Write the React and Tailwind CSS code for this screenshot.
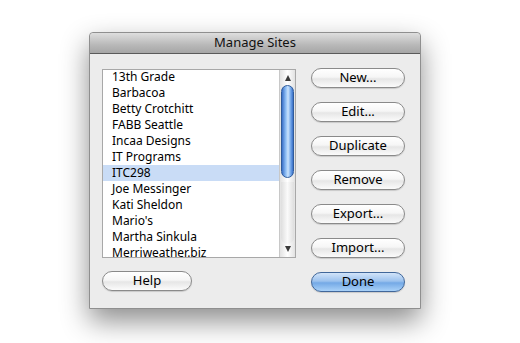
const sites = [
    '13th Grade',
    'Barbacoa',
    'Betty Crotchitt',
    'FABB Seattle',
    'Incaa Designs',
    'IT Programs',
    'ITC298',
    "Joe Messinger",
    'Kati Sheldon',
    "Mario's",
    'Martha Sinkula',
    'Merriweather.biz',
]

const font = { fontFamily: '"Lucida Grande", "Noto Sans", "DejaVu Sans", sans-serif' }

function AquaButton({ children, primary, className = '' }) {
    const look = primary
        ? 'border-[#41679a] bg-[linear-gradient(#d2e4f9_0%,#9cc2ee_45%,#74a9e6_55%,#a9d1f8_100%)]'
        : 'border-[#8a8a8a] bg-[linear-gradient(#ffffff_0%,#f6f6f6_45%,#e6e6e6_55%,#fbfbfb_100%)]'
    return (
        <button
            type="button"
            className={`flex h-[20px] items-center justify-center rounded-full border pb-[2px] text-[13px] leading-none text-black shadow-[0_1px_1px_rgba(0,0,0,0.15)] ${look} ${className}`}
        >
            {children}
        </button>
    )
}

function ScrollBar() {
    return (
        <div className="flex w-[16px] flex-col items-center border-l border-[#c8c8c8] bg-[linear-gradient(90deg,#e2e2e2,#ffffff_50%,#e2e2e2)]">
            <div className="mt-[5px] h-0 w-0 border-x-[3.5px] border-b-[6px] border-x-transparent border-b-[#3a3a3a]" />
            <div className="mt-[4px] h-[93px] w-[13px] rounded-full border border-[#2f5c9c] bg-[linear-gradient(90deg,#3a70c8,#8fbff5_35%,#cbe3fc_55%,#6ea3e8_80%,#3a70c8)]" />
            <div className="mt-[4px] h-[62px] w-[13px] rounded-b-full bg-[linear-gradient(90deg,#dedede,#fafafa_50%,#dedede)]" />
            <div className="mt-auto mb-[5px] h-0 w-0 border-x-[3.5px] border-t-[6px] border-x-transparent border-t-[#3a3a3a]" />
        </div>
    )
}

export default function App() {
    return (
        <div className="h-[343px] w-[520px] bg-white pl-[89px] pt-[32px]" style={font}>
            <div className="flex h-[277px] w-[332px] flex-col rounded-t-[4px] border border-[#8f8f8f] bg-[#ececec] shadow-[0_12px_28px_rgba(0,0,0,0.45)]">
                <div className="flex h-[21px] items-center justify-center rounded-t-[4px] border-b border-[#5a5a5a] bg-[linear-gradient(#dedede,#b8b8b8_60%,#a6a6a6)] pb-[1px] text-[13px] text-[#111]">
                    Manage Sites
                </div>

                <div className="flex gap-[15px] pl-[12px] pt-[14px]">
                    <div className="flex flex-col">
                        <div className="mt-[1px] flex h-[189px] w-[194px] overflow-hidden border border-[#a8a8a8] bg-white">
                            <ul className="-mt-[1px] flex-1 text-[12px] text-black">
                                {sites.map(site => (
                                    <li
                                        key={site}
                                        className={`flex h-[16px] items-center pl-[9px] ${site === 'ITC298' ? 'bg-[#c9dcf6]' : ''}`}
                                    >
                                        {site}
                                    </li>
                                ))}
                            </ul>
                            <ScrollBar />
                        </div>
                        <AquaButton className="mt-[13px] w-[90px]">Help</AquaButton>
                    </div>

                    <div className="flex w-[94px] flex-col gap-[14px]">
                        <AquaButton>New...</AquaButton>
                        <AquaButton>Edit...</AquaButton>
                        <AquaButton>Duplicate</AquaButton>
                        <AquaButton>Remove</AquaButton>
                        <AquaButton>Export...</AquaButton>
                        <AquaButton>Import...</AquaButton>
                        <AquaButton primary>Done</AquaButton>
                    </div>
                </div>
            </div>
        </div>
    )
}
